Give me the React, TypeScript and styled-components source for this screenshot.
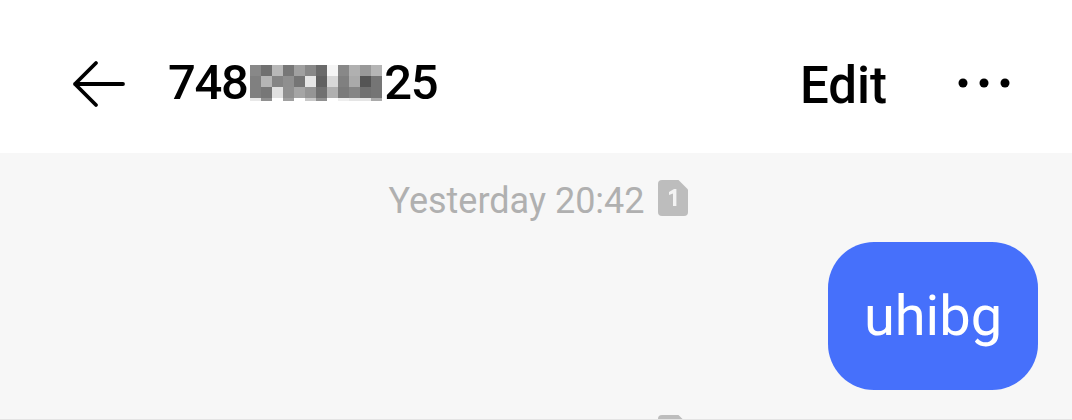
import React from "react";
import styled, { createGlobalStyle } from "styled-components";

const GlobalStyle = createGlobalStyle`
    html, body {
        margin: 0;
        height: 100%;
        overflow: hidden;
        background: #f7f7f7;
        font-family: Roboto, "Noto Sans", sans-serif;
    }
`;

const Page = styled.div`
    display: flex;
    flex-direction: column;
    height: 420px;
    overflow: hidden;
`;

const Header = styled.header`
    display: flex;
    align-items: center;
    flex: 0 0 153px;
    box-sizing: border-box;
    padding: 15px 61px 0 72px;
    background: #ffffff;
    color: #000000;
`;

const BackIcon = styled.svg`
    width: 54px;
    height: 48px;
    margin-right: 42px;
`;

const Title = styled.h1`
    display: flex;
    align-items: center;
    margin: 0 0 3px;
    font-size: 49px;
    font-weight: 500;
    line-height: 56px;
    letter-spacing: -1.4px;
`;

const Mosaic = styled.div`
    display: grid;
    grid-template-columns: repeat(12, 11px);
    grid-template-rows: 11px 11px 11px 3px;
    margin: 0 2px 0 3px;
`;

const MosaicCell = styled.span<{ $shade: string }>`
    background: ${(props) => props.$shade};
`;

const EditButton = styled.span`
    margin-left: auto;
    margin-right: 70px;
    margin-top: 4px;
    font-size: 51px;
    font-weight: 500;
    line-height: 56px;
`;

const MoreIcon = styled.svg`
    width: 54px;
    height: 12px;
    margin-bottom: 2px;
`;

const Thread = styled.main`
    display: flex;
    flex: 1;
    flex-direction: column;
    border-bottom: 1px solid #e4e4e4;
    overflow: hidden;
`;

const Stamp = styled.div`
    display: flex;
    flex: 0 0 auto;
    align-items: center;
    justify-content: center;
    gap: 13px;
    padding-top: 27px;
    height: 36px;
    margin-left: 4px;
    color: #b0b0b0;
    font-size: 36px;
    line-height: 36px;
`;

const StampText = styled.span<{ $hidden?: boolean }>`
    margin-top: 6px;
    visibility: ${(props) => (props.$hidden ? "hidden" : "visible")};
`;

const SimIcon = styled.svg`
    width: 30px;
    height: 36px;
    flex: none;
`;

const Bubble = styled.div`
    align-self: flex-end;
    display: flex;
    flex: 0 0 148px;
    align-items: center;
    justify-content: center;
    box-sizing: border-box;
    width: 210px;
    margin: 26px 34px 0 0;
    border-radius: 46px;
    background: #4670fb;
    color: #ffffff;
    font-size: 56px;
    font-weight: 400;
`;

const NextStamp = styled(Stamp)`
    padding-top: 25px;
`;

const shades = [
    "#888888", "#707070", "#b8b8b8", "#777777", "#a0a0a0", "#888888", "#6a6a6a", "#f5f5f5", "#888888", "#b0b0b0", "#999999", "#b5b5b5",
    "#808080", "#b5b5b5", "#858585", "#8f8f8f", "#757575", "#e6e6e6", "#606060", "#d8d8d8", "#808080", "#aaaaaa", "#555555", "#757575",
    "#808080", "#777777", "#e0e0e0", "#909090", "#a5a5a5", "#959595", "#707070", "#b0b0b0", "#7a7a7a", "#858585", "#707070", "#757575",
    "#e8e8e8", "#909090", "#ffffff", "#a0a0a0", "#ffffff", "#c8c8c8", "#909090", "#ffffff", "#eeeeee", "#e5e5e5", "#e5e5e5", "#aaaaaa",
];

function Sim() {
    return (
        <SimIcon viewBox="0 0 30 36">
            <path
                d="M4 0H20.5L30 9.5V32a4 4 0 0 1-4 4H4a4 4 0 0 1-4-4V4a4 4 0 0 1 4-4Z"
                fill="#bdbdbd"
            />
            <path d="M11 12l5-3h2.4v17h-3.4V13.5l-4 1.6Z" fill="#f3f3f3" />
        </SimIcon>
    );
}

export default function App() {
    return (
        <Page>
            <GlobalStyle />
            <Header>
                <BackIcon viewBox="0 0 54 48">
                    <path
                        d="M51 24H3M24 3L3 24L24 45"
                        fill="none"
                        stroke="#000"
                        strokeWidth="3.8"
                        strokeLinecap="round"
                        strokeLinejoin="round"
                    />
                </BackIcon>
                <Title>
                    748
                    <Mosaic>
                        {shades.map((shade, i) => (
                            <MosaicCell key={`cell-${i}`} $shade={shade} />
                        ))}
                    </Mosaic>
                    25
                </Title>
                <EditButton>Edit</EditButton>
                <MoreIcon viewBox="0 0 54 12">
                    <circle cx="6" cy="6" r="4.5" fill="#000" />
                    <circle cx="27" cy="6" r="4.5" fill="#000" />
                    <circle cx="48" cy="6" r="4.5" fill="#000" />
                </MoreIcon>
            </Header>
            <Thread>
                <Stamp>
                    <StampText>Yesterday 20:42</StampText>
                    <Sim />
                </Stamp>
                <Bubble>uhibg</Bubble>
                <NextStamp>
                    <StampText $hidden>Yesterday 20:42</StampText>
                    <Sim />
                </NextStamp>
            </Thread>
        </Page>
    );
}
